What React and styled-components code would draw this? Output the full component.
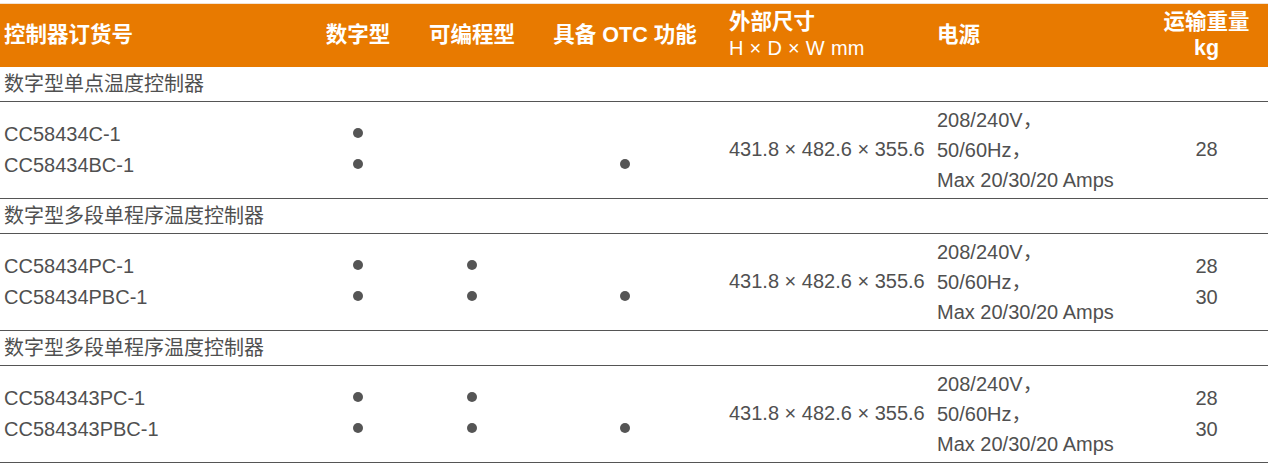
import React from "react";
import styled, { createGlobalStyle } from "styled-components";

const GlobalStyle = createGlobalStyle`
  body {
    margin: 0;
    background: #fff;
    font-family: "Liberation Sans", "Noto Sans CJK SC", sans-serif;
  }
`;

const Table = styled.table`
  width: 1268px;
  margin-top: 3px;
  border-collapse: collapse;
  table-layout: fixed;
  border-top: 1px solid #f2e3d3;
  color: #505050;
  font-size: 20px;
`;

const HeadRow = styled.tr`
  height: 63px;
  background: #e87a00;
`;

const Th = styled.th`
  padding: 0 0 0 ${(p) => (p.$align === "left" ? "7px" : "0")};
  text-align: ${(p) => p.$align || "center"};
  font-weight: 700;
  font-size: 21.5px;
  line-height: 26px;
  color: #fff;
  white-space: nowrap;
  &:first-child {
    padding-left: 4px;
  }
`;

const Sub = styled.div`
  font-weight: 400;
  font-size: 20px;
  letter-spacing: 0.3px;
`;

const GroupRow = styled.tr`
  height: 34px;
  border-bottom: 1px solid #555;
`;

const GroupCell = styled.td`
  padding: 0 0 0 4px;
  line-height: 34px;
`;

const DataRow = styled.tr`
  height: 97px;
  border-bottom: 1px solid #555;
`;

const Td = styled.td`
  padding: 0 0 0 ${(p) => (p.$align === "left" ? "7px" : "0")};
  text-align: ${(p) => p.$align || "center"};
  vertical-align: middle;
  white-space: nowrap;
  &:first-child {
    padding-left: 4px;
  }
`;

const Line = styled.div`
  height: ${(p) => p.$h || 31}px;
  line-height: ${(p) => p.$h || 31}px;
`;

const Dot = styled.span`
  display: inline-block;
  width: 10px;
  height: 10px;
  border-radius: 50%;
  background: #555;
  vertical-align: middle;
  margin-top: -4px;
`;

const DIMS = "431.8 × 482.6 × 355.6";
const POWER = ["208/240V，", "50/60Hz，", "Max 20/30/20 Amps"];

const groups = [
  {
    title: "数字型单点温度控制器",
    items: [
      { code: "CC58434C-1", digital: true, prog: false, otc: false },
      { code: "CC58434BC-1", digital: true, prog: false, otc: true },
    ],
    weights: ["28"],
  },
  {
    title: "数字型多段单程序温度控制器",
    items: [
      { code: "CC58434PC-1", digital: true, prog: true, otc: false },
      { code: "CC58434PBC-1", digital: true, prog: true, otc: true },
    ],
    weights: ["28", "30"],
  },
  {
    title: "数字型多段单程序温度控制器",
    items: [
      { code: "CC584343PC-1", digital: true, prog: true, otc: false },
      { code: "CC584343PBC-1", digital: true, prog: true, otc: true },
    ],
    weights: ["28", "30"],
  },
];

const DotColumn = ({ items, field }) => (
  <Td>
    {items.map((it) => (
      <Line key={it.code}>{it[field] ? <Dot /> : null}</Line>
    ))}
  </Td>
);

const Group = ({ group }) => (
  <>
    <GroupRow>
      <GroupCell colSpan={7}>{group.title}</GroupCell>
    </GroupRow>
    <DataRow>
      <Td $align="left">
        {group.items.map((it) => (
          <Line key={it.code}>{it.code}</Line>
        ))}
      </Td>
      <DotColumn items={group.items} field="digital" />
      <DotColumn items={group.items} field="prog" />
      <DotColumn items={group.items} field="otc" />
      <Td $align="left">{DIMS}</Td>
      <Td $align="left">
        {POWER.map((p) => (
          <Line key={p} $h={30}>
            {p}
          </Line>
        ))}
      </Td>
      <Td>
        {group.weights.map((w, i) => (
          <Line key={i}>{w}</Line>
        ))}
      </Td>
    </DataRow>
  </>
);

export default function App() {
  return (
    <>
      <GlobalStyle />
      <Table>
        <colgroup>
          <col style={{ width: 300 }} />
          <col style={{ width: 116 }} />
          <col style={{ width: 112 }} />
          <col style={{ width: 194 }} />
          <col style={{ width: 208 }} />
          <col style={{ width: 215 }} />
          <col style={{ width: 123 }} />
        </colgroup>
        <thead>
          <HeadRow>
            <Th $align="left">控制器订货号</Th>
            <Th>数字型</Th>
            <Th>可编程型</Th>
            <Th>具备 OTC 功能</Th>
            <Th $align="left">
              <div>外部尺寸</div>
              <Sub>H × D × W mm</Sub>
            </Th>
            <Th $align="left">电源</Th>
            <Th>
              <div>运输重量</div>
              <div>kg</div>
            </Th>
          </HeadRow>
        </thead>
        <tbody>
          {groups.map((g, i) => (
            <Group key={i} group={g} />
          ))}
        </tbody>
      </Table>
    </>
  );
}
